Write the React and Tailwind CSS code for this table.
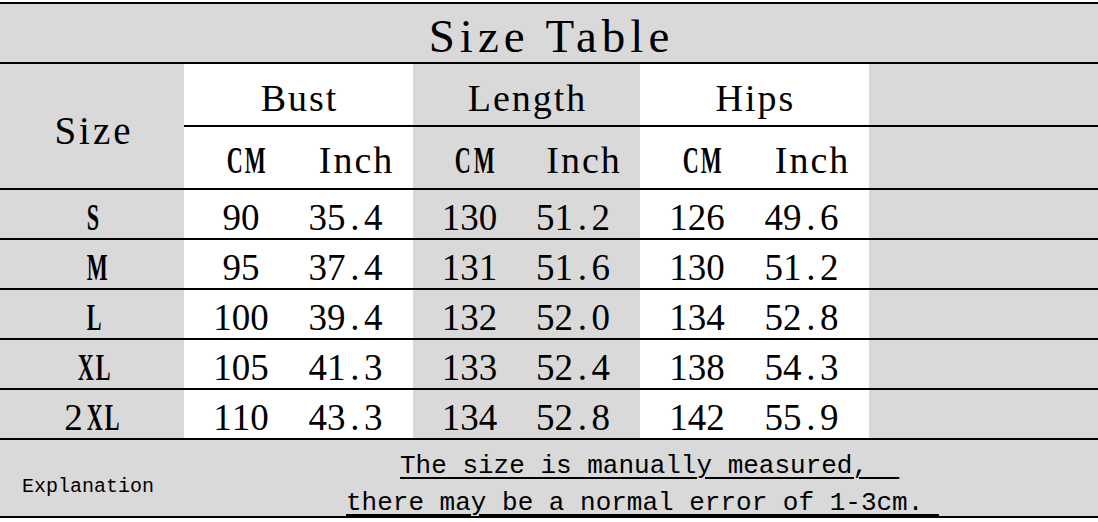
import clsx from 'clsx';

const groups = [
  { name: 'Bust', width: 'w-[229px]', bg: 'bg-white', cm: 'w-[114px]', inch: 'w-[115px]' },
  { name: 'Length', width: 'w-[227px]', bg: 'bg-[#d9d9d9]', cm: 'w-[113px]', inch: 'w-[114px]' },
  { name: 'Hips', width: 'w-[229px]', bg: 'bg-white', cm: 'w-[114px]', inch: 'w-[115px]' },
];

const rows = [
  { size: 'S', values: [['90', '35.4'], ['130', '51.2'], ['126', '49.6']] },
  { size: 'M', values: [['95', '37.4'], ['131', '51.6'], ['130', '51.2']] },
  { size: 'L', values: [['100', '39.4'], ['132', '52.0'], ['134', '52.8']] },
  { size: 'XL', values: [['105', '41.3'], ['133', '52.4'], ['138', '54.3']] },
  { size: '2XL', values: [['110', '43.3'], ['134', '52.8'], ['142', '55.9']] },
];

// half-width cells, like the spreadsheet's CJK font
function Mono({ text }) {
  return text.split('').map((ch, i) => (
    <span
      key={i}
      className={clsx('inline-block w-[0.5em] text-center', /[A-Z]/.test(ch) && 'scale-x-[0.6] font-bold')}
    >
      {ch}
    </span>
  ));
}

function App() {
  return (
    <div className="w-[1098px] h-[522px] bg-white text-black [font-family:'Liberation_Serif'] overflow-hidden">
      <div className="h-[2px] bg-white" />

      {/* title */}
      <div className="h-[62px] border-t-2 border-b-2 border-black bg-[#d9d9d9] flex items-center justify-center pt-[7px] pl-[5px]">
        <span className="text-[47px] leading-none tracking-[5px]">Size Table</span>
      </div>

      {/* header */}
      <div className="flex border-b-2 border-black">
        <div className="w-[184px] h-[124px] bg-[#d9d9d9] flex items-center justify-center pt-[8px] pl-[4px]">
          <span className="text-[39px] leading-none tracking-[3px]">Size</span>
        </div>
        <div className="flex-1 flex flex-col">
          <div className="flex h-[63px] border-b-2 border-black">
            {groups.map((g) => (
              <div key={g.name} className={clsx(g.width, g.bg, 'flex items-center justify-center pt-[6px] pl-[2px]')}>
                <span className="text-[38px] leading-none tracking-[2px]">{g.name}</span>
              </div>
            ))}
            <div className="flex-1 bg-[#d9d9d9]" />
          </div>
          <div className="flex h-[61px]">
            {groups.map((g) => (
              <div key={g.name} className={clsx('flex', g.bg)}>
                <div className={clsx(g.cm, 'flex items-center justify-center pt-[5px] text-[37px] leading-none')}>
                  <Mono text="CM" />
                </div>
                <div className={clsx(g.inch, 'flex items-center justify-center pt-[5px] pl-[2px]')}>
                  <span className="text-[38px] leading-none tracking-[2px]">Inch</span>
                </div>
              </div>
            ))}
            <div className="flex-1 bg-[#d9d9d9]" />
          </div>
        </div>
      </div>

      {/* data rows */}
      {rows.map((r) => (
        <div key={r.size} className="flex h-[50px] border-b-2 border-black text-[37px] leading-none">
          <div className="w-[184px] bg-[#d9d9d9] flex items-center justify-center pt-[7px]">
            <Mono text={r.size} />
          </div>
          {groups.map((g, i) => (
            <div key={g.name} className={clsx('flex', g.bg)}>
              <div className={clsx(g.cm, 'flex items-center justify-center pt-[7px]')}>
                <Mono text={r.values[i][0]} />
              </div>
              <div className={clsx(g.inch, 'flex items-center justify-center pt-[7px] pr-5')}>
                <Mono text={r.values[i][1]} />
              </div>
            </div>
          ))}
          <div className="flex-1 bg-[#d9d9d9]" />
        </div>
      ))}

      {/* explanation */}
      <div className="flex h-[78px] border-b-2 border-black bg-[#d9d9d9] [font-family:'Liberation_Mono']">
        <div className="w-[184px] pl-[22px] pt-[37px] text-[20px] leading-[20px]">Explanation</div>
        <div className="flex-1 flex flex-col items-start pt-[8px] text-[26px] leading-[37px]">
          <span className="ml-[216px] whitespace-pre underline decoration-[1.5px] underline-offset-[4px]">
            {'The size is manually measured,  '}
          </span>
          <span className="ml-[162px] whitespace-pre underline decoration-[1.5px] underline-offset-[4px]">
            {'there may be a normal error of 1-3cm. '}
          </span>
        </div>
      </div>
    </div>
  );
}

export default App;
